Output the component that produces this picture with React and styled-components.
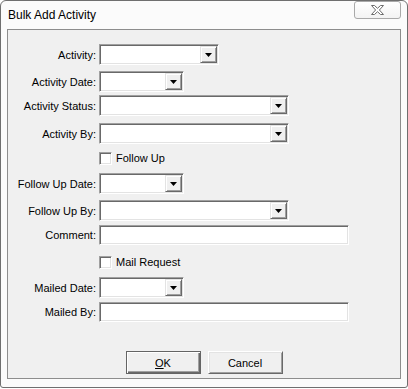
import React from "react";
import styled, { createGlobalStyle, css } from "styled-components";

const GlobalStyle = createGlobalStyle`
  html, body { margin: 0; padding: 0; background: #ffffff; }
  body { font-family: "Liberation Sans", Arial, sans-serif; }
  * { box-sizing: border-box; }
`;

const Window = styled.div`
  width: 408px;
  height: 388px;
  border: 1px solid #6f6f6f;
  border-radius: 6px 6px 3px 3px;
  background: #fbfbfb;
  display: flex;
  flex-direction: column;
  padding: 0 6px 8px 6px;
`;

const TitleBar = styled.div`
  height: 28px;
  display: flex;
  justify-content: space-between;
  align-items: flex-start;
`;

const Title = styled.div`
  padding: 6px 0 0 1px;
  font-size: 12px;
  line-height: 16px;
  color: #000;
`;

const CloseButton = styled.div`
  width: 47px;
  height: 18px;
  border: 1px solid #a9a9a9;
  border-radius: 3px;
  background: linear-gradient(#ffffff, #f3f3f3);
  display: flex;
  align-items: center;
  justify-content: center;
`;

const Panel = styled.div`
  flex: 1;
  border: 1px solid #8d8d8d;
  background: #f0f0f0;
  display: flex;
  flex-direction: column;
  font-size: 11px;
  color: #000;
`;

const Row = styled.div`
  display: grid;
  grid-template-columns: 88px auto;
  column-gap: 3px;
  align-items: center;
  height: ${(p) => p.$h}px;
  margin-top: ${(p) => p.$mt}px;
`;

const Label = styled.div`
  text-align: right;
  white-space: nowrap;
  line-height: 14px;
`;

const sunken = css`
  background: #fff;
  border: 1px solid;
  border-color: #a0a0a0 #ffffff #ffffff #a0a0a0;
  box-shadow: inset 1px 1px #696969, inset -1px -1px #e3e3e3;
`;

const Combo = styled.div`
  ${sunken};
  width: ${(p) => p.$w}px;
  height: 21px;
  padding: 1px;
  display: flex;
  justify-content: flex-end;
`;

const DropButton = styled.div`
  width: 17px;
  height: 100%;
  background: #f0f0f0;
  border: 1px solid;
  border-color: #e3e3e3 #696969 #696969 #e3e3e3;
  box-shadow: inset 1px 1px #ffffff, inset -1px -1px #a0a0a0;
  display: flex;
  align-items: center;
  justify-content: center;
`;

const TextBox = styled.div`
  ${sunken};
  width: ${(p) => p.$w}px;
  height: 20px;
`;

const CheckWrap = styled.label`
  display: flex;
  align-items: center;
  gap: 4px;
  line-height: 13px;
`;

const CheckBox = styled.span`
  ${sunken};
  display: inline-block;
  width: 13px;
  height: 13px;
`;

const ButtonRow = styled.div`
  display: flex;
  justify-content: center;
  gap: 7px;
  margin-top: 29px;
`;

const Button = styled.div`
  width: 75px;
  height: 23px;
  background: #f0f0f0;
  display: flex;
  align-items: center;
  justify-content: center;
  font-size: 11px;
  color: #000;
  border: 1px solid;
  ${(p) =>
    p.$default
      ? css`
          border-color: #646464;
          box-shadow: inset 1px 1px #ffffff, inset -1px -1px #696969,
            inset -2px -2px #a0a0a0;
        `
      : css`
          border-color: #ffffff #696969 #696969 #ffffff;
          box-shadow: inset 1px 1px #e3e3e3, inset -1px -1px #a0a0a0;
        `}
`;

const Arrow = () => (
  <svg width="7" height="4" viewBox="0 0 7 4">
    <polygon points="0,0 7,0 3.5,4" fill="#000" />
  </svg>
);

const CloseGlyph = () => (
  <svg width="15" height="12" viewBox="0 0 15 12">
    <path
      d="M1.5 1.5 H4.5 L7.5 4.3 L10.5 1.5 H13.5 L9.4 6 L13.5 10.5 H10.5 L7.5 7.7 L4.5 10.5 H1.5 L5.6 6 Z"
      fill="#ffffff"
      stroke="#6c6c6c"
      strokeWidth="1"
      strokeLinejoin="round"
    />
  </svg>
);

const ComboRow = ({ label, w, mt }) => (
  <Row $h={21} $mt={mt}>
    <Label>{label}</Label>
    <Combo $w={w}>
      <DropButton>
        <Arrow />
      </DropButton>
    </Combo>
  </Row>
);

const TextRow = ({ label, w, mt }) => (
  <Row $h={20} $mt={mt}>
    <Label>{label}</Label>
    <TextBox $w={w} />
  </Row>
);

const CheckRow = ({ label, mt }) => (
  <Row $h={13} $mt={mt}>
    <span />
    <CheckWrap>
      <CheckBox />
      {label}
    </CheckWrap>
  </Row>
);

export default function App() {
  return (
    <>
      <GlobalStyle />
      <Window>
        <TitleBar>
          <Title>Bulk Add Activity</Title>
          <CloseButton>
            <CloseGlyph />
          </CloseButton>
        </TitleBar>
        <Panel>
          <ComboRow label="Activity:" w={120} mt={14} />
          <ComboRow label="Activity Date:" w={85} mt={6} />
          <ComboRow label="Activity Status:" w={190} mt={3} />
          <ComboRow label="Activity By:" w={190} mt={7} />
          <CheckRow label="Follow Up" mt={8} />
          <ComboRow label="Follow Up Date:" w={85} mt={8} />
          <ComboRow label="Follow Up By:" w={190} mt={6} />
          <TextRow label="Comment:" w={250} mt={4} />
          <CheckRow label="Mail Request" mt={11} />
          <ComboRow label="Mailed Date:" w={85} mt={8} />
          <TextRow label="Mailed By:" w={250} mt={4} />
          <ButtonRow>
            <Button $default>
              <span>
                <u>O</u>K
              </span>
            </Button>
            <Button>Cancel</Button>
          </ButtonRow>
        </Panel>
      </Window>
    </>
  );
}
